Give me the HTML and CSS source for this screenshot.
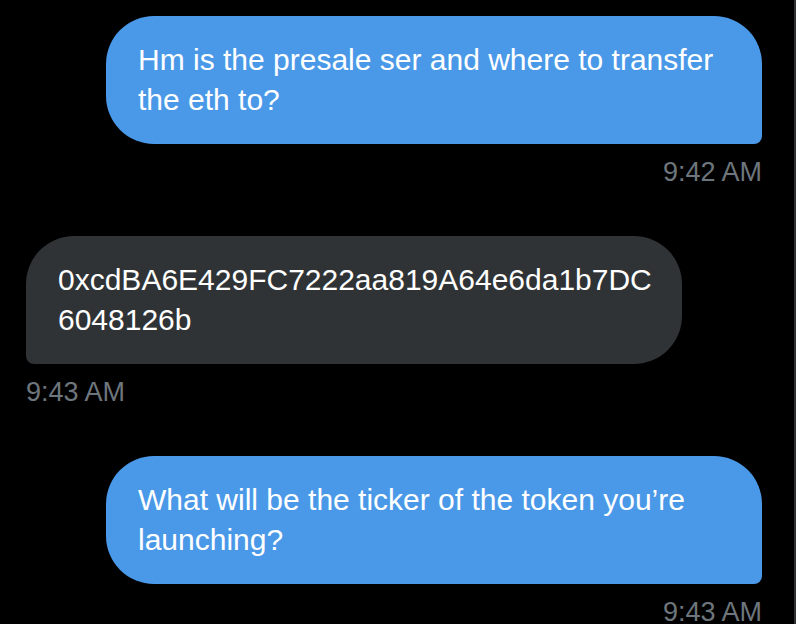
FILE: index.html
```html
<!DOCTYPE html>
<html lang="en">
<head>
    <meta charset="UTF-8">
    <meta name="viewport" content="width=device-width, initial-scale=1.0">
    <title>Messages</title>
    <link rel="stylesheet" href="styles.css">
</head>
<body>
    <main class="thread">
        <div class="message sent">
            <div class="bubble">Hm is the presale ser and where to transfer the eth to?</div>
            <div class="time">9:42 AM</div>
        </div>

        <div class="message received">
            <div class="bubble address">0xcdBA6E429FC7222aa819A64e6da1b7DC6048126b</div>
            <div class="time">9:43 AM</div>
        </div>

        <div class="message sent">
            <div class="bubble">What will be the ticker of the token you’re launching?</div>
            <div class="time">9:43 AM</div>
        </div>
    </main>
</body>
</html>
```

FILE: styles.css
```css
html, body {
    margin: 0;
    padding: 0;
    background: #000;
}

body {
    font-family: "Liberation Sans", Arial, Helvetica, sans-serif;
    color: #fff;
    height: 624px;
    overflow: hidden;
}

.thread {
    box-sizing: border-box;
    width: 796px;
    min-height: 624px;
    padding: 16px 32px 0 26px;
    border-right: 2px solid #2f3336;
    display: flex;
    flex-direction: column;
    gap: 48px;
}

.message {
    display: flex;
    flex-direction: column;
}

.message.sent {
    align-items: flex-end;
}

.message.received {
    align-items: flex-start;
}

.bubble {
    box-sizing: border-box;
    max-width: 656px;
    padding: 24px 32px;
    font-size: 30px;
    line-height: 40px;
    color: #fff;
}

.sent .bubble {
    background: #4a99e8;
    border-radius: 48px 48px 8px 48px;
}

.received .bubble {
    background: #2f3336;
    border-radius: 48px 48px 48px 8px;
}

.bubble.address {
    width: 656px;
    padding-right: 26px;
    word-break: break-all;
}

.time {
    margin-top: 12px;
    font-size: 27px;
    line-height: 32px;
    color: #6e767d;
}
```
